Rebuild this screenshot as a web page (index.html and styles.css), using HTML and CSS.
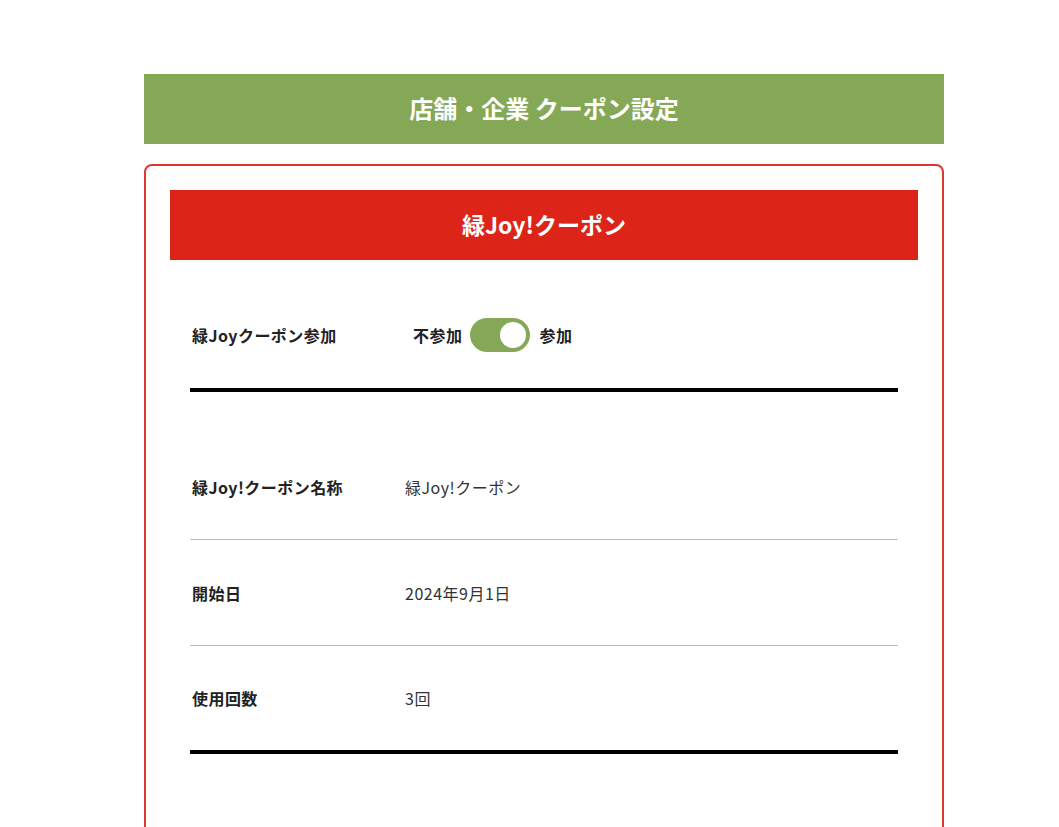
FILE: index.html
```html
<!DOCTYPE html>
<html lang="ja">
<head>
<meta charset="utf-8">
<title>店舗・企業 クーポン設定</title>
<link rel="stylesheet" href="styles.css">
</head>
<body>
<div class="page">
  <h1 class="page-title">店舗・企業 クーポン設定</h1>
  <div class="card">
    <h2 class="card-title">緑Joy!クーポン</h2>
    <div class="card-body">
      <div class="section section-join">
        <div class="row-join">
          <span class="label label-join">緑Joyクーポン参加</span>
          <div class="toggle-group">
            <span class="toggle-text">不参加</span>
            <span class="switch"><span class="knob"></span></span>
            <span class="toggle-text">参加</span>
          </div>
        </div>
      </div>
      <div class="section section-info">
        <div class="row">
          <span class="label">緑Joy!クーポン名称</span>
          <span class="value">緑Joy!クーポン</span>
        </div>
        <div class="row">
          <span class="label">開始日</span>
          <span class="value">2024年9月1日</span>
        </div>
        <div class="row">
          <span class="label">使用回数</span>
          <span class="value">3回</span>
        </div>
      </div>
    </div>
  </div>
</div>
</body>
</html>
```
FILE: styles.css
```css
* { box-sizing: border-box; }
html, body { margin: 0; padding: 0; background: #fff; }
body {
  font-family: "Noto Sans CJK JP", "Noto Sans", sans-serif;
  color: #222;
}
.page {
  width: 800px;
  margin: 74px 0 0 144px;
}
.page-title {
  margin: 0;
  height: 70px;
  padding-bottom: 4px;
  background: #84a856;
  color: #fff;
  font-size: 24px;
  font-weight: 700;
  display: flex;
  align-items: center;
  justify-content: center;
}
.card {
  margin-top: 20px;
  border: 2px solid #d9392e;
  border-radius: 8px;
  padding: 24px 24px 80px;
}
.card-title {
  margin: 0;
  height: 70px;
  padding-bottom: 3px;
  background: #dc2518;
  color: #fff;
  font-size: 23px;
  font-weight: 700;
  display: flex;
  align-items: center;
  justify-content: center;
}
.card-body {
  padding: 0 20px;
}
.section {
  border-bottom: 4px solid #000;
}
.section-join {
  padding: 58px 0 36px;
}
.row-join {
  display: flex;
  align-items: center;
  height: 34px;
  padding-left: 2px;
}
.label {
  font-size: 16px;
  font-weight: 700;
  letter-spacing: 0.45px;
  color: #222;
}
.label-join {
  width: 221px;
}
.toggle-group {
  display: flex;
  align-items: center;
}
.toggle-text {
  font-size: 16px;
  font-weight: 700;
  letter-spacing: 0.5px;
}
.switch {
  width: 60px;
  height: 34px;
  margin: 0 10px 0 7px;
  border-radius: 17px;
  background: #84a856;
  display: flex;
  align-items: center;
  justify-content: flex-end;
  padding-right: 4px;
}
.knob {
  width: 26px;
  height: 26px;
  border-radius: 50%;
  background: #fff;
}
.section-info {
  margin-top: 42px;
}
.row {
  display: flex;
  align-items: center;
  height: 106px;
  padding-left: 2px;
  border-bottom: 1px solid #bbb;
}
.row:last-child {
  height: 104px;
  border-bottom: none;
}
.row .label {
  width: 213px;
}
.value {
  font-size: 16px;
  letter-spacing: 0.5px;
  color: #333;
}
```
